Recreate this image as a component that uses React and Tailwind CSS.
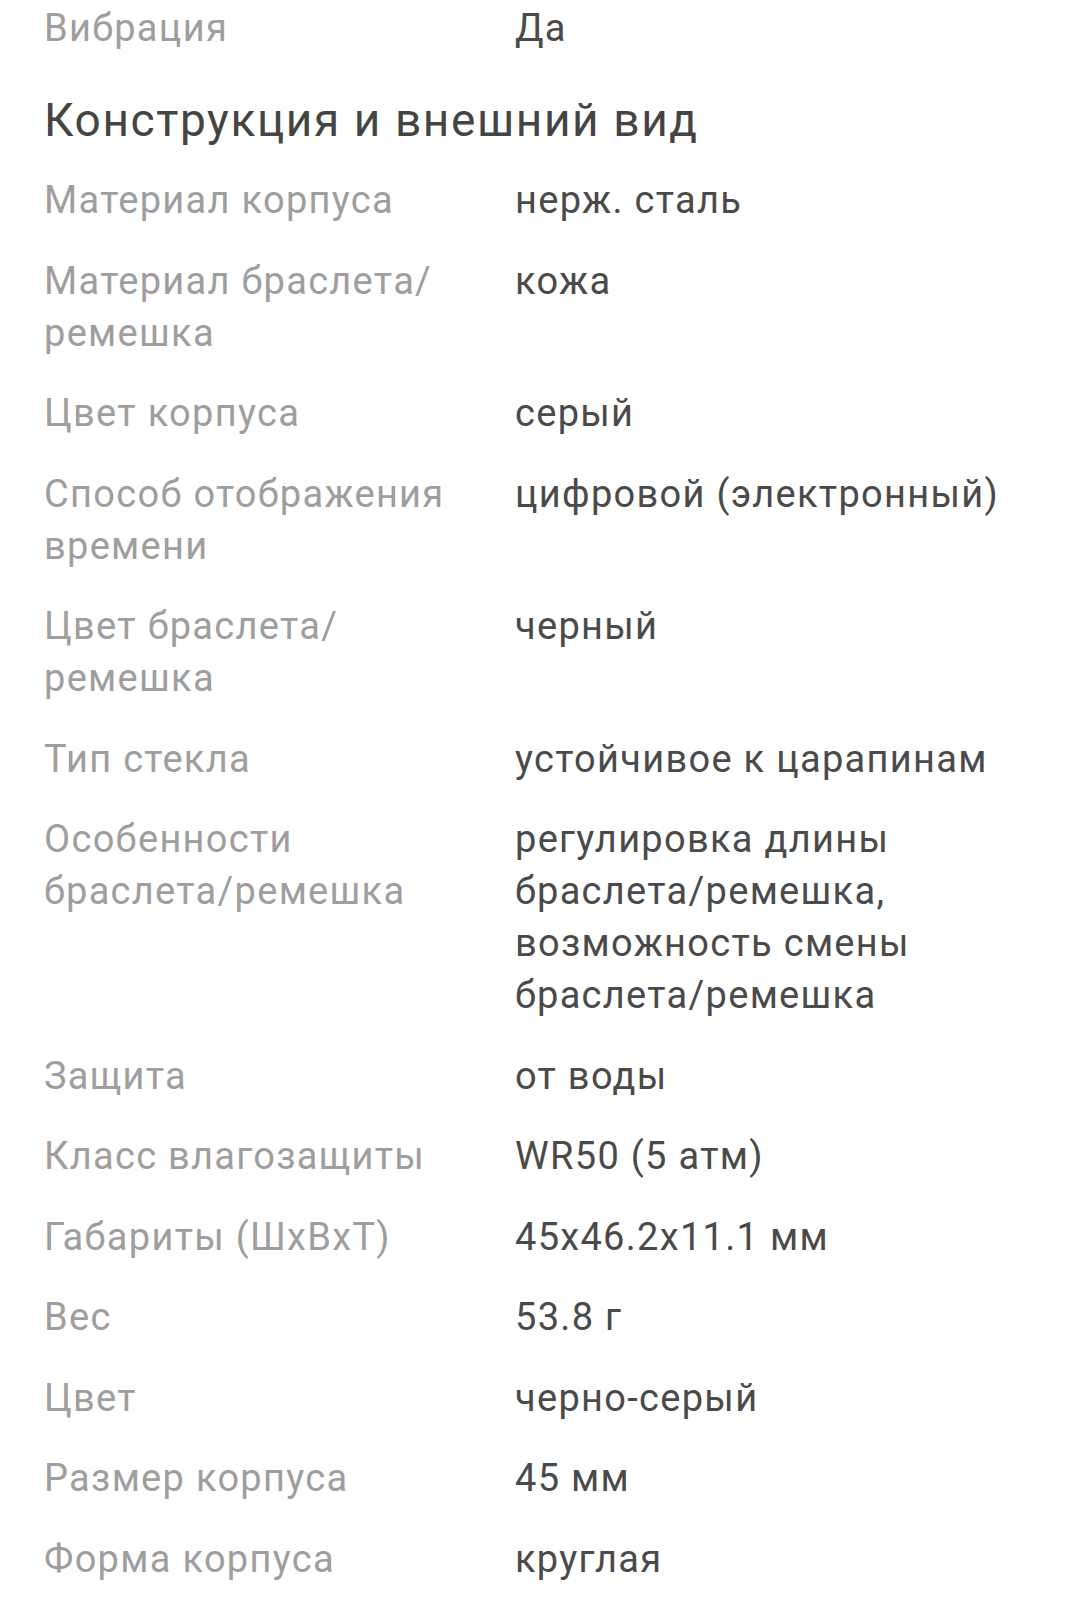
export default function App() {
  const rows = [
    [["Материал корпуса"], ["нерж. сталь"]],
    [["Материал браслета/", "ремешка"], ["кожа"]],
    [["Цвет корпуса"], ["серый"]],
    [["Способ отображения", "времени"], ["цифровой (электронный)"]],
    [["Цвет браслета/", "ремешка"], ["черный"]],
    [["Тип стекла"], ["устойчивое к царапинам"]],
    [
      ["Особенности", "браслета/ремешка"],
      ["регулировка длины", "браслета/ремешка,", "возможность смены", "браслета/ремешка"],
    ],
    [["Защита"], ["от воды"]],
    [["Класс влагозащиты"], ["WR50 (5 атм)"]],
    [["Габариты (ШхВхТ)"], ["45x46.2x11.1 мм"]],
    [["Вес"], ["53.8 г"]],
    [["Цвет"], ["черно-серый"]],
    [["Размер корпуса"], ["45 мм"]],
    [["Форма корпуса"], ["круглая"]],
  ];

  const Row = ({ label, value }) => (
    <div className="flex">
      <div className="w-[471px] shrink-0 text-[#9e9e9e] whitespace-nowrap">
        {label.map((l, i) => (
          <div key={i}>{l}</div>
        ))}
      </div>
      <div className="flex-1 text-[#4a4a4a] whitespace-nowrap">
        {value.map((v, i) => (
          <div key={i}>{v}</div>
        ))}
      </div>
    </div>
  );

  return (
    <div
      className="w-[1080px] min-h-[1598px] bg-white pl-[44px] pr-[30px] pt-[2px] text-[38px] leading-[52px] tracking-[1.3px] overflow-hidden"
      style={{ fontFamily: "Roboto, 'Noto Sans', sans-serif" }}
    >
      <Row label={["Вибрация"]} value={["Да"]} />
      <div className="mt-[38px] mb-[26px] text-[46px] leading-[56px] tracking-[1.6px] text-[#444444]">
        Конструкция и внешний вид
      </div>
      <div className="flex flex-col gap-[28.5px]">
        {rows.map(([l, v], i) => (
          <Row key={i} label={l} value={v} />
        ))}
      </div>
    </div>
  );
}
